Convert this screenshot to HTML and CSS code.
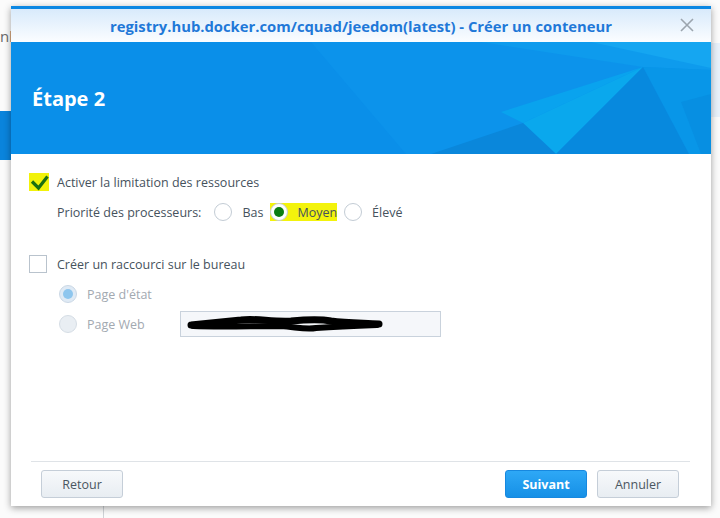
FILE: index.html
```html
<!DOCTYPE html>
<html lang="fr">
<head>
<meta charset="utf-8">
<title>Créer un conteneur</title>
<link rel="stylesheet" href="styles.css">
</head>
<body>
<div class="screen">
  <div class="desk">
    <div class="desk-text">nb</div>
    <div class="desk-blue"></div>
    <div class="desk-panel"></div>
    <div class="desk-line"></div>
  </div>

  <div class="dialog">
    <div class="titlebar">
      <span class="title">registry.hub.docker.com/cquad/jeedom(latest) - Créer un conteneur</span>
      <svg class="close" width="14" height="14" viewBox="0 0 14 14"><path d="M1 1L13 13M13 1L1 13" stroke="#9ca5ae" stroke-width="1.6" fill="none"/></svg>
    </div>

    <div class="banner">
      <svg class="facets" width="700" height="112" viewBox="0 0 700 112" preserveAspectRatio="none">
        <rect width="700" height="112" fill="#0a8fe9"/>
        <polygon points="300,0 700,0 700,112 395,112" fill="#0c93eb"/>
        <polygon points="470,0 700,0 700,28 632,25" fill="#0e9bed"/>
        <polygon points="580,0 700,0 700,26" fill="#15a6f1"/>
        <polygon points="632,25 490,70 512,81" fill="#09a3ee"/>
        <polygon points="632,25 512,81 545,112" fill="#0aa8ed"/>
        <polygon points="632,25 700,28 700,112 678,112" fill="#0896e8"/>
        <polygon points="632,25 545,112 678,112" fill="#0789de"/>
        <polygon points="512,81 420,112 545,112" fill="#0a87db"/>
        <polygon points="670,60 700,52 700,112 690,112" fill="#078fe2"/>
      </svg>
      <h1 class="step">Étape 2</h1>
    </div>

    <div class="content">
      <div class="row row-first">
        <span class="checkbox marked">
          <svg width="20" height="18" viewBox="0 0 20 18"><path d="M3 8.5L9.5 15L18.5 3.5" stroke="#1c6f12" stroke-width="3.2" fill="none" stroke-linejoin="miter"/></svg>
        </span>
        <span class="label">Activer la limitation des ressources</span>
      </div>

      <div class="row row-prio">
        <span class="label prio">Priorité des processeurs:</span>
        <span class="opt"><span class="radio"></span><span class="label">Bas</span></span>
        <span class="opt marked"><span class="radio on"></span><span class="label">Moyen</span></span>
        <span class="opt"><span class="radio"></span><span class="label">Élevé</span></span>
      </div>

      <div class="row row-shortcut">
        <span class="checkbox"></span>
        <span class="label">Créer un raccourci sur le bureau</span>
      </div>

      <div class="row row-sub">
        <span class="radio dis-on"></span>
        <span class="label muted">Page d'état</span>
      </div>

      <div class="row row-sub row-web">
        <span class="radio dis"></span>
        <span class="label muted web">Page Web</span>
        <span class="field">
          <svg width="210" height="24" viewBox="0 0 210 24"><path d="M10 13C30 11 50 9 60 8C75 6 90 10 110 9C120 8 140 7 150 9C165 11 180 11 198 12" stroke="#000" stroke-width="7" fill="none" stroke-linecap="round"/><path d="M12 14C40 15 70 14 100 14C115 15 125 18 135 16C150 15 170 14 196 13" stroke="#000" stroke-width="6" fill="none" stroke-linecap="round"/></svg>
        </span>
      </div>
    </div>

    <div class="footer">
      <button class="btn">Retour</button>
      <span class="spacer"></span>
      <button class="btn primary">Suivant</button>
      <button class="btn">Annuler</button>
    </div>
  </div>
</div>
</body>
</html>
```

FILE: styles.css
```css
html, body {
  margin: 0;
  padding: 0;
}

.screen {
  position: relative;
  width: 720px;
  height: 518px;
  overflow: hidden;
  background: #fbfbfb;
  font-family: "Open Sans", "Noto Sans", sans-serif;
  font-size: 12.5px;
  color: #46525d;
}

.desk-text {
  position: absolute;
  left: 0;
  top: 26px;
  font-size: 15px;
  color: #6a6a6a;
}

.desk-blue {
  position: absolute;
  left: 0;
  top: 111px;
  width: 12px;
  height: 49px;
  background: #0a84dc;
}

.desk-panel {
  position: absolute;
  right: 0;
  top: 43px;
  width: 10px;
  height: 74px;
  background: #e8f1fa;
}

.desk-line {
  position: absolute;
  left: 103px;
  top: 500px;
  width: 1px;
  height: 20px;
  background: #cfd3d7;
}

.dialog {
  position: absolute;
  left: 11px;
  top: 6px;
  width: 700px;
  height: 500px;
  box-sizing: border-box;
  border-top: 3px solid #0b87e3;
  background: #fff;
  box-shadow: 0 2px 7px rgba(0, 0, 0, 0.38);
  display: flex;
  flex-direction: column;
}

.titlebar {
  height: 33px;
  flex: none;
  background: linear-gradient(#d8eafb, #fbfdff);
  display: flex;
  align-items: center;
  justify-content: center;
  position: relative;
}

.title {
  font-weight: 700;
  font-size: 14.8px;
  color: #1f78d8;
}

.close {
  position: absolute;
  right: 17px;
  top: 9px;
}

.banner {
  position: relative;
  height: 112px;
  flex: none;
  display: flex;
  align-items: center;
  overflow: hidden;
}

.facets {
  position: absolute;
  left: 0;
  top: 0;
}

.step {
  position: relative;
  margin: 0 0 0 21px;
  font-size: 20px;
  font-weight: 700;
  color: #fff;
  padding-top: 1px;
}

.content {
  flex: 1;
  padding: 19px 0 0 18px;
}

.row {
  display: flex;
  align-items: center;
}

.row-first {
  height: 18px;
}

.row-prio {
  margin-top: 12px;
  height: 18px;
  padding-left: 28px;
}

.row-shortcut {
  margin-top: 34px;
  height: 18px;
}

.row-sub {
  margin-top: 12px;
  height: 18px;
  padding-left: 30px;
}

.row-web {
  margin-top: 12px;
}

.checkbox {
  width: 16px;
  height: 16px;
  border: 1px solid #b9c3cd;
  background: #fff;
  flex: none;
  display: flex;
  align-items: center;
  justify-content: center;
  margin-right: 10px;
}

.checkbox.marked {
  width: 20px;
  height: 18px;
  border: none;
  background: #f2f20a;
  margin-right: 8px;
}

.prio {
  margin-right: 13px;
}

.opt {
  display: flex;
  align-items: center;
  height: 18px;
  margin-right: 7px;
}

.opt .radio {
  margin-right: 10px;
}

.opt.marked {
  background: #f3f30c;
  margin-right: 7px;
}

.opt.marked .radio {
  margin-right: 9px;
}

.radio {
  width: 16px;
  height: 16px;
  border: 1px solid #c3ccd5;
  border-radius: 50%;
  background: #fff;
  flex: none;
  display: flex;
  align-items: center;
  justify-content: center;
}

.radio.on::after {
  content: "";
  width: 10px;
  height: 10px;
  border-radius: 50%;
  background: #0b7d12;
}

.row-sub .radio {
  margin-right: 10px;
}

.radio.dis-on {
  background: #dfeaf5;
  border-color: #cbd8e5;
}

.radio.dis-on::after {
  content: "";
  width: 10px;
  height: 10px;
  border-radius: 50%;
  background: #8ec6ee;
}

.radio.dis {
  background: #e9eef3;
  border-color: #d5dde5;
}

.muted {
  color: #a2a9b1;
}

.web {
  width: 93px;
}

.field {
  width: 259px;
  height: 24px;
  flex: none;
  border: 1px solid #c9d2dc;
  background: #f5f7fa;
  display: block;
}

.field svg {
  display: block;
}

.footer {
  flex: none;
  margin: 0 21px 0 20px;
  border-top: 1px solid #dfe3e7;
  padding: 8px 11px 8px 10px;
  display: flex;
  gap: 10px;
}

.spacer {
  flex: 1;
}

.btn {
  width: 82px;
  height: 28px;
  box-sizing: border-box;
  border: 1px solid #c5ced8;
  border-radius: 3px;
  background: linear-gradient(#f7f9fb, #e8edf2);
  color: #4a5661;
  font-family: "Open Sans", "Noto Sans", sans-serif;
  font-size: 12.5px;
  padding: 0;
}

.btn.primary {
  border-color: #1788df;
  background: linear-gradient(#2ea8f6, #1690e6);
  color: #fff;
  font-weight: 700;
}
```
